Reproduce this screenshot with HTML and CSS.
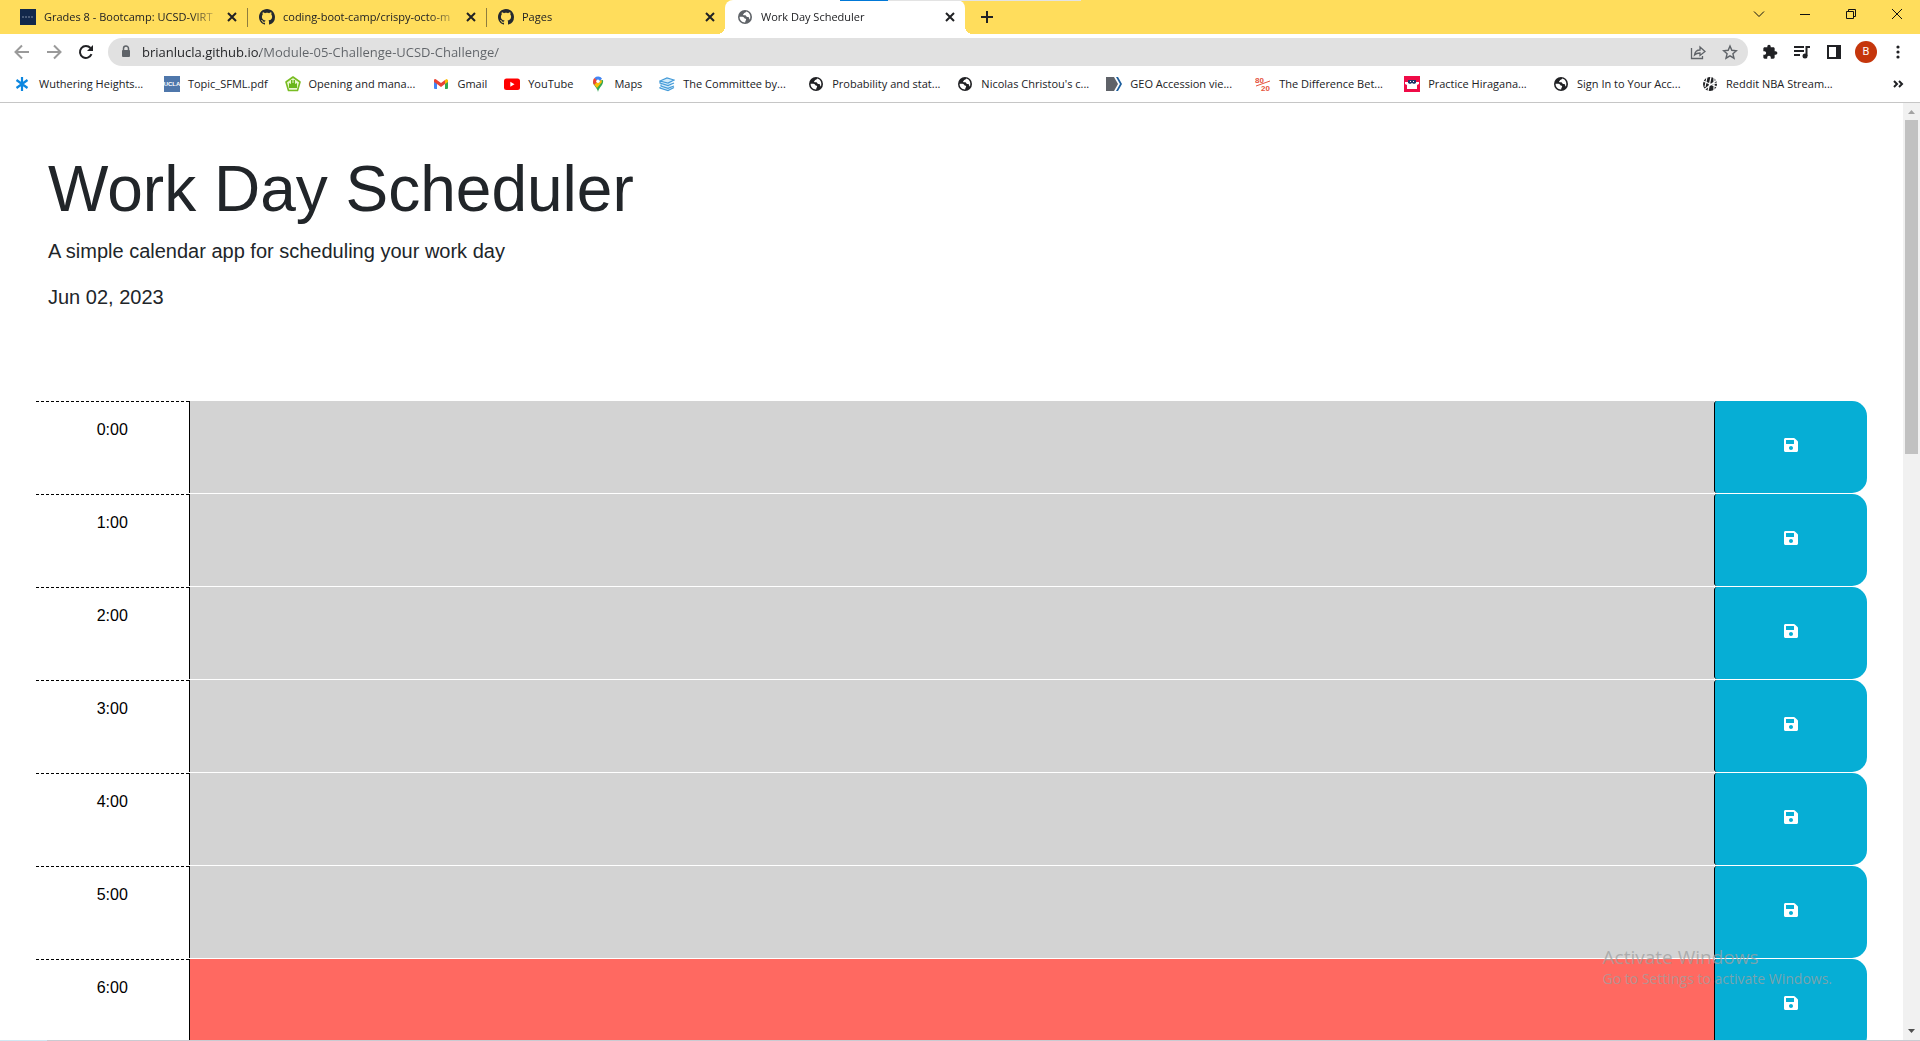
FILE: index.html
```html
<!DOCTYPE html>
<html lang="en">
<head>
<meta charset="utf-8">
<meta name="viewport" content="width=device-width, initial-scale=1">
<title>Work Day Scheduler</title>
<link rel="stylesheet" href="styles.css">
</head>
<body>
<svg class="sprite" aria-hidden="true">
  <symbol id="github" viewBox="0 0 16 16"><path fill="#24292f" d="M8 0C3.58 0 0 3.58 0 8c0 3.54 2.29 6.53 5.47 7.59.4.07.55-.17.55-.38 0-.19-.01-.82-.01-1.49-2.01.37-2.53-.49-2.69-.94-.09-.23-.48-.94-.82-1.13-.28-.15-.68-.52-.01-.53.63-.01 1.08.58 1.23.82.72 1.21 1.87.87 2.33.66.07-.52.28-.87.51-1.07-1.78-.2-3.64-.89-3.64-3.95 0-.87.31-1.59.82-2.15-.08-.2-.36-1.02.08-2.12 0 0 .67-.21 2.2.82.64-.18 1.32-.27 2-.27s1.36.09 2 .27c1.53-1.04 2.2-.82 2.2-.82.44 1.1.16 1.92.08 2.12.51.56.82 1.27.82 2.15 0 3.07-1.87 3.75-3.65 3.95.29.25.54.73.54 1.48 0 1.07-.01 1.93-.01 2.2 0 .21.15.46.55.38A8.01 8.01 0 0 0 16 8c0-4.42-3.58-8-8-8z"/></symbol>
  <symbol id="globe" viewBox="0 0 16 16"><circle cx="8" cy="8" r="7" fill="currentColor"/><path fill="#fff" d="M2.6 7.800c1.100-.2 3.100-.2 4.100.4.8.500.5 1.200 1.300 1.400.9.300 1.400.500 1 1.500-.3.700-.8.900-.8 2.300C4.900 13.500 2.500 11.200 2.600 7.800zM9.200 2.500c-.3 1-1.100 1.200-2 1.400-.6.200-.2.900-.8 1.200-.5.300-.4.900.2 1.100.9.200 1.600-.300 2.200.3.500.600.800 1.500 1.600 1.400.9-.1 1.700.2 1.700 1.200 0 .9.300 1.300.8 1.300 1.300-3.300-.2-7.200-3.700-7.900z"/></symbol>
  <symbol id="close" viewBox="0 0 16 16"><path d="M4 4l8 8M12 4l-8 8" stroke="#202124" stroke-width="2"/></symbol>
  <symbol id="save" viewBox="0 0 448 512"><path fill="#fff" d="M433.941 129.941l-83.882-83.882A48 48 0 0 0 316.118 32H48C21.490 32 0 53.490 0 80v352c0 26.510 21.490 48 48 48h352c26.510 0 48-21.490 48-48V163.882a48 48 0 0 0-14.059-33.941zM224 416c-35.346 0-64-28.654-64-64 0-35.346 28.654-64 64-64s64 28.654 64 64c0 35.346-28.654 64-64 64zm96-304.520V212c0 6.627-5.373 12-12 12H76c-6.627 0-12-5.373-12-12V108c0-6.627 5.373-12 12-12h228.520c3.183 0 6.235 1.264 8.485 3.515l3.480 3.480A11.996 11.996 0 0 1 320 111.480z"/></symbol>
</svg>

<header class="browser">
  <div class="tabstrip">
    <div class="tab">
      <svg class="icon" viewBox="0 0 16 16"><path fill="#12284b" d="M0 0h16v16H0z"/><path d="M2 8h12" stroke="#7f8da5" stroke-dasharray="2 1"/></svg>
      <span class="tab-title">Grades 8 - Bootcamp: UCSD-VIRT</span>
      <button class="tab-close" aria-label="Close tab"><svg class="icon"><use href="#close"/></svg></button>
    </div>
    <div class="tab divided">
      <svg class="icon"><use href="#github"/></svg>
      <span class="tab-title">coding-boot-camp/crispy-octo-m</span>
      <button class="tab-close" aria-label="Close tab"><svg class="icon"><use href="#close"/></svg></button>
    </div>
    <div class="tab divided">
      <svg class="icon"><use href="#github"/></svg>
      <span class="tab-title">Pages</span>
      <button class="tab-close" aria-label="Close tab"><svg class="icon"><use href="#close"/></svg></button>
    </div>
    <div class="tab active">
      <svg class="icon muted"><use href="#globe"/></svg>
      <span class="tab-title">Work Day Scheduler</span>
      <button class="tab-close" aria-label="Close tab"><svg class="icon"><use href="#close"/></svg></button>
    </div>
    <button class="new-tab" aria-label="New tab"><svg class="icon" viewBox="0 0 16 16"><path d="M8 2v12M2 8h12" stroke="#202124" stroke-width="2"/></svg></button>
    <div class="window-controls">
      <button aria-label="Search tabs"><svg class="icon" viewBox="0 0 16 16"><path d="M3 5.500l5 5 5-5" class="thin"/></svg></button>
      <button aria-label="Minimize"><svg class="icon" viewBox="0 0 16 16"><path d="M3 8.500h10" class="thin"/></svg></button>
      <button aria-label="Restore"><svg class="icon" viewBox="0 0 16 16"><path d="M3.500 5.500h7v7h-7zM5.500 5.500v-2h7v7h-2" class="thin"/></svg></button>
      <button aria-label="Close window"><svg class="icon" viewBox="0 0 16 16"><path d="M3 3l10 10M13 3L3 13" class="thin"/></svg></button>
    </div>
  </div>

  <div class="toolbar">
    <button class="tool" aria-label="Back"><svg class="icon" viewBox="0 0 16 16"><path d="M15 8H2M8 1.500L1.500 8 8 14.500" fill="none" stroke="#9a9a9a" stroke-width="2"/></svg></button>
    <button class="tool" aria-label="Forward"><svg class="icon" viewBox="0 0 16 16"><path d="M1 8h13M8 1.500L14.500 8 8 14.500" fill="none" stroke="#9a9a9a" stroke-width="2"/></svg></button>
    <button class="tool" aria-label="Reload"><svg class="icon" viewBox="0 0 16 16"><path d="M13.500 10.200A6 6 0 1 1 12.500 4" fill="none" stroke="#202124" stroke-width="2"/><path d="M15 1v6H9z" fill="#202124"/></svg></button>
    <div class="omnibox">
      <svg class="icon" viewBox="0 0 16 16"><path fill="#5f6368" d="M5 6h6a1 1 0 0 1 1 1v5a1 1 0 0 1-1 1H5a1 1 0 0 1-1-1V7a1 1 0 0 1 1-1z"/><path d="M5.500 7V4.500a2.500 2.500 0 0 1 5 0V7" fill="none" stroke="#5f6368" stroke-width="1.500"/></svg>
      <input class="address" type="text" aria-label="Address" value="brianlucla.github.io/Module-05-Challenge-UCSD-Challenge/">
      <button class="tool" aria-label="Share"><svg class="icon" viewBox="0 0 16 16"><path d="M1.500 4v10.500h11V12M4.500 11c.5-3.500 2.500-5 5.500-5V3l5 4.500-5 4V9c-2.500 0-4 .5-5.500 2z" fill="none" stroke="#5f6368" stroke-width="1.300"/></svg></button>
      <button class="tool" aria-label="Bookmark this page"><svg class="icon" viewBox="0 0 16 16"><path d="M8 2l1.800 4.300 4.600.4-3.500 3 1.100 4.500L8 11.800l-4 2.400 1.100-4.500-3.500-3 4.600-.4z" fill="none" stroke="#5f6368" stroke-width="1.400"/></svg></button>
    </div>
    <div class="actions">
      <button class="tool" aria-label="Extensions"><svg class="icon" viewBox="0 0 24 24"><path fill="#202124" d="M20.500 11H19V7c0-1.100-.9-2-2-2h-4V3.500C13 2.120 11.880 1 10.500 1S8 2.120 8 3.500V5H4c-1.100 0-1.990.9-1.990 2v3.800H3.500c1.490 0 2.700 1.210 2.700 2.700s-1.210 2.700-2.700 2.700H2V20c0 1.100.9 2 2 2h3.800v-1.500c0-1.490 1.210-2.700 2.700-2.700 1.490 0 2.700 1.210 2.700 2.700V22H17c1.100 0 2-.9 2-2v-4h1.500c1.380 0 2.500-1.120 2.500-2.500S21.880 11 20.500 11z"/></svg></button>
      <button class="tool" aria-label="Media controls"><svg class="icon" viewBox="0 0 16 16"><path d="M0 3h10M0 7h10M0 11h6M12.500 12V3H16" fill="none" stroke="#202124" stroke-width="2"/><circle cx="11" cy="12" r="2.500" fill="#202124"/></svg></button>
      <button class="tool" aria-label="Side panel"><svg class="icon" viewBox="0 0 16 16"><path fill="#202124" fill-rule="evenodd" d="M1 1h14v14H1zm2 2v10h7V3z"/></svg></button>
      <button class="tool" aria-label="Profile"><span class="avatar">B</span></button>
      <button class="tool" aria-label="Menu"><svg class="icon" viewBox="0 0 16 16"><g fill="#202124"><circle cx="8" cy="3" r="1.600"/><circle cx="8" cy="8" r="1.600"/><circle cx="8" cy="13" r="1.600"/></g></svg></button>
    </div>
  </div>

  <nav class="bookmarks" aria-label="Bookmarks">
    <div class="bookmark-list">
      <a class="long" href="#"><svg class="icon" viewBox="0 0 16 16"><path d="M7 1v14M1.500 4l11 8M12.500 4l-11 8" stroke="#0c87e0" stroke-width="2.200"/></svg>Wuthering Heights...</a>
      <a href="#"><svg class="icon" viewBox="0 0 16 16"><path fill="#4f77ab" d="M0 0h16v16H0z"/><text x="8" y="10" class="logo-ucla">UCLA</text></svg>Topic_SFML.pdf</a>
      <a class="long" href="#"><svg class="icon" viewBox="0 0 16 16"><path d="M8 1l7 5-2.500 8.500h-9L1 6z" fill="#e9f7d0" stroke="#79bd23" stroke-width="1.600" stroke-linejoin="round"/><path fill="#6ab61b" d="M4 7l2 1V4h1.500v3h1V4H10v4l2-1v5H4z"/></svg>Opening and mana...</a>
      <a href="#"><svg class="icon" viewBox="0 0 16 16"><path fill="#4285f4" d="M1 4h3v9H2a1 1 0 0 1-1-1z"/><path fill="#34a853" d="M12 4h3v8a1 1 0 0 1-1 1h-2z"/><path fill="#fbbc04" d="M12 4l1.500-1 1.500 1v2l-3 2z"/><path fill="#ea4335" d="M1 3.500L2.500 3 8 7l4-3v4l-4 3-4-3-3-2z"/></svg>Gmail</a>
      <a href="#"><svg class="icon" viewBox="0 0 16 16"><rect y="2.500" width="16" height="11.500" rx="2.500" fill="#f00"/><path fill="#fff" d="M6.300 5.700v5l4.200-2.500z"/></svg>YouTube</a>
      <a href="#"><svg class="icon" viewBox="0 0 16 16"><path fill="#34a853" d="M8 16C7.500 12 3 9.500 3 5.500L13 4c1 5-4 7-5 12z"/><path fill="#fbbc04" d="M4 8.500L10.500 2 12 6l-5 6z"/><path fill="#4285f4" d="M4.500 2A5 5 0 0 1 12 2.500L8 7z"/><path fill="#ea4335" d="M4.300 2L8 5 4 9C2.600 6.500 2.700 4 4.300 2z"/><circle cx="8" cy="5.300" r="1.700" fill="#fff"/></svg>Maps</a>
      <a class="long" href="#"><svg class="icon" viewBox="0 0 16 16"><path d="M1 5l7-3 7 2-6 3zM1 5v2l8 2.500L15 7M2 8.500v1.500l7 2.300L15 10M1 11v1l8 2.500 6-3" fill="#d3ecfa" stroke="#459bd8" stroke-width="1.200"/></svg>The Committee by...</a>
      <a class="long" href="#"><svg class="icon"><use href="#globe"/></svg>Probability and stat...</a>
      <a class="long" href="#"><svg class="icon"><use href="#globe"/></svg>Nicolas Christou's c...</a>
      <a class="long" href="#"><svg class="icon" viewBox="0 0 16 16"><path fill="#5f6268" d="M0 1h8l4 7-4 7H0z"/><path fill="#1c5f9e" d="M10 1h2l4 7-4 7h-2l4-7z"/></svg>GEO Accession vie...</a>
      <a class="long" href="#"><svg class="icon" viewBox="0 0 16 16"><text x="0" y="7" class="logo-ratio">80</text><text x="6" y="15" class="logo-ratio">20</text><path d="M1 10l14-5" stroke="#e5533d"/></svg>The Difference Bet...</a>
      <a class="long" href="#"><svg class="icon" viewBox="0 0 16 16"><path fill="#ef0b47" d="M0 0h16v16H0z"/><path fill="#fff" d="M1 6h3l1-2h6l1 2h3v2l-2 1v4H3V9L1 8z"/><path fill="#20376b" d="M4 4h8v3l-2 1-2-1-2 1-2-1z"/><path fill="#fff" d="M6 5h1v1H6zM9 5h1v1H9z"/></svg>Practice Hiragana...</a>
      <a class="long" href="#"><svg class="icon"><use href="#globe"/></svg>Sign In to Your Acc...</a>
      <a class="long" href="#"><svg class="icon" viewBox="0 0 16 16"><circle cx="8" cy="8" r="7" fill="#202124"/><path d="M1 5l14 6M5 1l-2 10M9 1L6 15M15 4L3 13M12 1l0 14M8 8l8-1" stroke="#fff" stroke-width="1.200"/></svg>Reddit NBA Stream...</a>
    </div>
    <button class="tool" aria-label="More bookmarks"><svg class="icon" viewBox="0 0 16 16"><path d="M4 5l3 3-3 3M9 5l3 3-3 3" fill="none" stroke="#202124" stroke-width="2"/></svg></button>
  </nav>
</header>

<div class="viewport">
  <main class="page">
    <header class="intro">
      <h1>Work Day Scheduler</h1>
      <p>A simple calendar app for scheduling your work day</p>
      <p>Jun 02, 2023</p>
    </header>
    <section class="schedule">
      <div class="time-block past"><label for="hour-0">0:00</label><textarea id="hour-0"></textarea><button class="save" aria-label="Save"><svg><use href="#save"/></svg></button></div>
      <div class="time-block past"><label for="hour-1">1:00</label><textarea id="hour-1"></textarea><button class="save" aria-label="Save"><svg><use href="#save"/></svg></button></div>
      <div class="time-block past"><label for="hour-2">2:00</label><textarea id="hour-2"></textarea><button class="save" aria-label="Save"><svg><use href="#save"/></svg></button></div>
      <div class="time-block past"><label for="hour-3">3:00</label><textarea id="hour-3"></textarea><button class="save" aria-label="Save"><svg><use href="#save"/></svg></button></div>
      <div class="time-block past"><label for="hour-4">4:00</label><textarea id="hour-4"></textarea><button class="save" aria-label="Save"><svg><use href="#save"/></svg></button></div>
      <div class="time-block past"><label for="hour-5">5:00</label><textarea id="hour-5"></textarea><button class="save" aria-label="Save"><svg><use href="#save"/></svg></button></div>
      <div class="time-block present"><label for="hour-6">6:00</label><textarea id="hour-6"></textarea><button class="save" aria-label="Save"><svg><use href="#save"/></svg></button></div>
    </section>
  </main>
  <div class="scrollbar" aria-hidden="true">
    <svg viewBox="0 0 17 17"><path fill="#a3a3a3" d="M5 11l3.500-4 3.500 4z"/></svg>
    <div class="track"><div class="thumb"></div></div>
    <svg viewBox="0 0 17 17"><path fill="#505050" d="M5 6l3.500 4L12 6z"/></svg>
  </div>
  <aside class="activation">
    <strong>Activate Windows</strong>
    <span>Go to Settings to activate Windows.</span>
  </aside>
</div>
</body>
</html>
```

FILE: styles.css
```css
*, *::before, *::after { box-sizing: border-box; }

body {
  margin: 0;
  height: 100vh;
  display: flex;
  flex-direction: column;
  overflow: hidden;
  background: #fff;
  color: #212529;
  font-family: "Liberation Sans", Arial, sans-serif;
  font-size: 16px;
  line-height: 24px;
}

button {
  display: flex;
  align-items: center;
  justify-content: center;
  padding: 0;
  border: 0;
  background: none;
}

.sprite { position: absolute; width: 0; height: 0; }
.icon { width: 16px; height: 16px; flex: none; }
.thin { fill: none; stroke: #111; stroke-width: 1; }

/* Browser frame */
.browser {
  flex: none;
  border-bottom: 1px solid #c6c6c6;
  color: #202124;
  font-family: "Open Sans", "Segoe UI", sans-serif;
  font-size: 11px;
  line-height: 16px;
}

.tabstrip {
  position: relative;
  display: flex;
  height: 34px;
  padding-left: 8px;
  background: #ffdd5c;
}
.tabstrip::after {
  content: "";
  position: absolute;
  top: 0;
  left: 840px;
  width: 241px;
  height: 1px;
  background: linear-gradient(to right, #0078d7 48px, #e3e3e3 48px);
}

.tab {
  position: relative;
  display: flex;
  align-items: center;
  flex: 0 1 239px;
  min-width: 0;
  padding: 0 5px 0 12px;
}
.tab-title {
  flex: 1;
  min-width: 0;
  margin-left: 8px;
  overflow: hidden;
  white-space: nowrap;
  -webkit-mask-image: linear-gradient(to left, transparent, #000 32px);
  mask-image: linear-gradient(to left, transparent, #000 32px);
}
.tab-close { width: 20px; height: 20px; }
.divided::before {
  content: "";
  position: absolute;
  left: 0;
  top: 8px;
  width: 1px;
  height: 19px;
  background: #8f7d3e;
}
.tab.active {
  flex-basis: 240px;
  border-radius: 8px 8px 0 0;
  background: #fff;
}
.active::before, .active::after {
  content: "";
  position: absolute;
  bottom: 0;
  width: 8px;
  height: 8px;
}
.active::before { left: -8px; background: radial-gradient(circle at 0 0, transparent 8px, #fff 8px); }
.active::after { right: -8px; background: radial-gradient(circle at 100% 0, transparent 8px, #fff 8px); }
.muted { color: #5f6368; }
.new-tab { width: 44px; height: 34px; }
.window-controls { display: flex; height: 28px; margin-left: auto; }
.window-controls button { width: 46px; }

.toolbar {
  display: flex;
  align-items: center;
  height: 36px;
  padding: 0 6px;
}
.tool { width: 32px; height: 28px; flex: none; }
.omnibox {
  display: flex;
  align-items: center;
  flex: 1;
  min-width: 0;
  height: 28px;
  margin: 0 6px;
  padding: 0 2px 0 10px;
  border-radius: 14px;
  background: #e1e1e1;
}
.address {
  flex: 1;
  min-width: 0;
  height: 20px;
  margin-left: 8px;
  padding: 0;
  border: 0;
  background: linear-gradient(to right, #202124 118px, #5f6368 118px);
  -webkit-background-clip: text;
  background-clip: text;
  color: transparent;
  font: 13px/20px "Open Sans", "Segoe UI", sans-serif;
}
.actions { display: flex; }
.avatar {
  width: 22px;
  height: 22px;
  border-radius: 50%;
  background: #c5360c;
  color: #fff;
  font: 11px/22px Roboto, sans-serif;
}

.bookmarks {
  display: flex;
  align-items: center;
  height: 32px;
  padding: 0 6px 4px 15px;
}
.bookmark-list {
  display: flex;
  justify-content: space-between;
  flex: 1;
  min-width: 0;
  margin-right: 48px;
}
.bookmark-list a {
  display: flex;
  align-items: center;
  gap: 8px;
  color: inherit;
  text-decoration: none;
  white-space: nowrap;
}
.bookmark-list .long { min-width: 132px; }
.logo-ucla { fill: #fff; font: bold 6px "Liberation Sans", sans-serif; text-anchor: middle; }
.logo-ratio { fill: #e5533d; font: bold 8px "Liberation Sans", sans-serif; }

/* Scheduler page */
.viewport {
  position: relative;
  display: flex;
  flex: 1;
  min-height: 0;
  border-bottom: 1px solid;
  border-image: linear-gradient(to right, #cfe8f3 48px, #c9cbd2 48px) 1;
}
.page {
  flex: 1;
  min-width: 0;
  overflow: hidden;
}
.intro {
  margin-bottom: 25px;
  padding: 48px 48px 32px;
  font-size: 20px;
  line-height: 30px;
}
.intro h1 {
  margin: 0 0 8px;
  font-size: 64px;
  font-weight: 400;
  line-height: 77px;
}
.intro p { margin: 0 0 16px; }
.intro p:last-child { margin-bottom: 32px; }

.schedule { padding: 0 36px; }
.time-block {
  display: grid;
  grid-template-columns: 1fr 10fr 1fr;
  height: 93px;
  padding-bottom: 1px;
}
.time-block label {
  padding-top: 16px;
  border-top: 1px dashed #000;
  color: #000;
  text-align: center;
}
.time-block textarea {
  width: 100%;
  height: 100%;
  padding: 8px;
  border: 0;
  border-left: 1px solid #000;
  resize: none;
  font: inherit;
}
.past textarea { background: #d3d3d3; }
.present textarea { background: #ff6961; }
.save {
  padding-bottom: 4px;
  border-left: 1px solid #000;
  border-radius: 3px 15px 15px 3px;
  background: #06aed5;
}
.save svg { width: 16px; height: 16px; }

.scrollbar {
  display: flex;
  flex-direction: column;
  width: 17px;
  background: #f1f1f1;
}
.scrollbar svg { width: 17px; height: 17px; }
.track { flex: 1; padding: 0 2px; }
.thumb { height: 37%; background: #c1c1c1; }

.activation {
  position: absolute;
  right: 88px;
  bottom: 50px;
  display: flex;
  flex-direction: column;
  color: rgba(160, 160, 160, 0.75);
  font-family: "Open Sans", "Segoe UI", sans-serif;
  font-size: 14px;
  line-height: 22px;
  pointer-events: none;
}
.activation strong { font-size: 19px; font-weight: 400; }
```
